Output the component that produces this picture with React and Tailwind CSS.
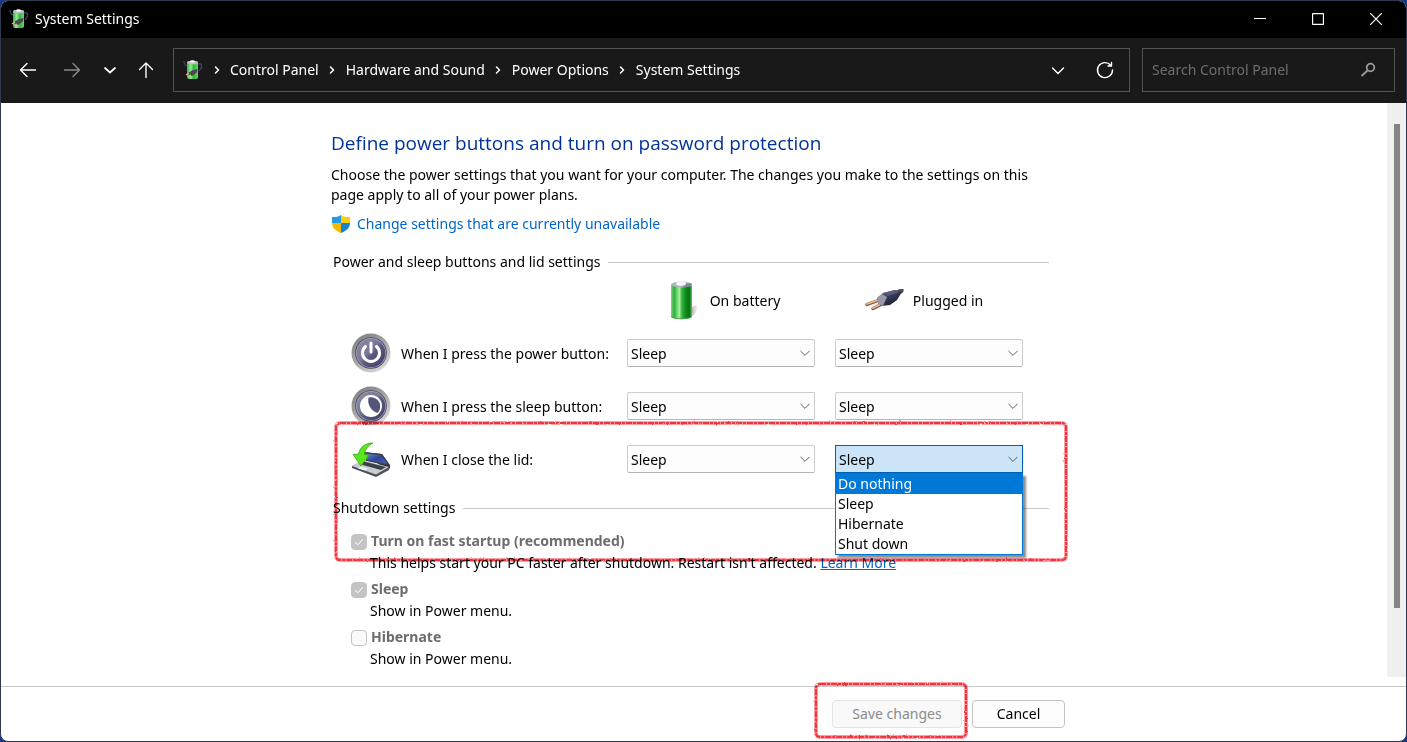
import { useState } from "react";

const OPTIONS = ["Do nothing", "Sleep", "Hibernate", "Shut down"];

const CRUMBS = ["Control Panel", "Hardware and Sound", "Power Options", "System Settings"];

/* ---------- icons ---------- */

function PowerPlanIcon({ className }) {
  return (
    <svg viewBox="0 0 20 20" className={className} aria-hidden="true">
      <defs>
        <linearGradient id="planBody" x1="0" x2="1">
          <stop offset="0" stopColor="#3fae4b" />
          <stop offset="0.35" stopColor="#8df08f" />
          <stop offset="0.6" stopColor="#35b53f" />
          <stop offset="1" stopColor="#66d867" />
        </linearGradient>
      </defs>
      <path d="M1 1c0 3 1 4 3 5" fill="none" stroke="#3a3f55" strokeWidth="1.4" />
      <path d="M15 4c3-1 4 1 3.500 3S17 9 16 11" fill="none" stroke="#3a3f55" strokeWidth="1.500" />
      <rect x="4" y="1" width="11" height="18" rx="2" fill="url(#planBody)" />
      <ellipse cx="9.500" cy="2.500" rx="5.500" ry="1.800" fill="#b9c0c6" />
      <ellipse cx="9.500" cy="1.500" rx="2.500" ry="1.300" fill="#f4f6f8" />
      <path d="M5 13l5-3 4.500-1-.5 3.500-5 3.500-3-1z" fill="#4a4a50" />
      <path d="M3 15l3-2M5 17l3-2" stroke="#e0b090" strokeWidth="1.300" />
    </svg>
  );
}

function BatteryIcon() {
  return (
    <svg viewBox="0 0 40 40" className="size-10" aria-hidden="true">
      <defs>
        <linearGradient id="battBody" x1="0" x2="1">
          <stop offset="0" stopColor="#7ed87c" />
          <stop offset="0.15" stopColor="#2fae3c" />
          <stop offset="0.4" stopColor="#a4f39b" />
          <stop offset="0.52" stopColor="#35b13c" />
          <stop offset="0.7" stopColor="#0f8a1c" />
          <stop offset="0.88" stopColor="#067310" />
          <stop offset="1" stopColor="#5cc65c" />
        </linearGradient>
        <linearGradient id="battShadow" x1="0" x2="1">
          <stop offset="0" stopColor="#999999" />
          <stop offset="1" stopColor="#999999" stopOpacity="0" />
        </linearGradient>
      </defs>
      <path d="M28 28l8-4v5c-2 4-5 7-9 9z" fill="url(#battShadow)" />
      <path d="M9 4v32c1 4 20 4 21 0V4z" fill="url(#battBody)" />
      <ellipse cx="19.500" cy="4.500" rx="10.500" ry="3" fill="#aeb5bd" />
      <path d="M20 4.500l9-1.500c2 2-1 4-7 4.500z" fill="#7e8794" />
      <ellipse cx="19" cy="3.500" rx="5" ry="2.300" fill="#f3f5f8" />
      <path d="M9 36c2 3 19 3 21 0v1c-2 3-19 3-21 0z" fill="#4c9a50" />
    </svg>
  );
}

function PlugIcon() {
  return (
    <svg viewBox="0 0 40 40" className="size-10" aria-hidden="true">
      <defs>
        <linearGradient id="plugBody" x1="0" y1="0" x2="0.6" y2="1">
          <stop offset="0" stopColor="#7f829b" />
          <stop offset="0.4" stopColor="#3d405c" />
          <stop offset="1" stopColor="#1c1e30" />
        </linearGradient>
      </defs>
      <path d="M2 24.500l11-4M8 28.500l10-5" stroke="#8a5a3c" strokeWidth="3.400" strokeLinecap="round" />
      <path d="M2 24l11-4M8 28l10-5" stroke="#eebd98" strokeWidth="1.800" strokeLinecap="round" />
      <path d="M31 11c3-2 5-2.500 8-1.500l-1 3-6 3.500z" fill="#4e5052" />
      <path d="M12 18l6-5 12-3 7 2-5 8-7 5-9 1z" fill="url(#plugBody)" />
      <path d="M12 18l5-4 5 3-4 9-5-2z" fill="#9799aa" />
      <path d="M18 13l12-3 4 2-11 4z" fill="#585b78" />
    </svg>
  );
}

function RoundButtonIcon({ children }) {
  return (
    <svg viewBox="0 0 40 40" className="size-10 shrink-0" aria-hidden="true">
      <defs>
        <linearGradient id="rim" x1="0" y1="0" x2="0.7" y2="1">
          <stop offset="0" stopColor="#777777" />
          <stop offset="0.5" stopColor="#a2a2a2" />
          <stop offset="1" stopColor="#d8d8d8" />
        </linearGradient>
        <linearGradient id="face" x1="0" y1="0" x2="1" y2="1">
          <stop offset="0" stopColor="#8e8ea6" />
          <stop offset="0.45" stopColor="#77779a" />
          <stop offset="0.55" stopColor="#5a5a80" />
          <stop offset="1" stopColor="#3c3c62" />
        </linearGradient>
      </defs>
      <circle cx="20" cy="20" r="19.500" fill="url(#rim)" />
      <circle cx="20" cy="20" r="15.800" fill="#4a4a66" />
      <circle cx="20" cy="20" r="15" fill="#a5a5b8" />
      <circle cx="20" cy="20" r="14.300" fill="url(#face)" />
      {children}
    </svg>
  );
}

function PowerButtonIcon() {
  return (
    <RoundButtonIcon>
      <path
        d="M14.500 13.500a8.500 8.500 0 1 0 11 0"
        fill="none"
        stroke="#ffffff"
        strokeWidth="3"
        strokeLinecap="round"
      />
      <path d="M20 10v9" stroke="#ffffff" strokeWidth="3" strokeLinecap="round" />
    </RoundButtonIcon>
  );
}

function SleepButtonIcon() {
  return (
    <RoundButtonIcon>
      <circle cx="20" cy="20" r="11" fill="#ffffff" />
      <path d="M17.500 11.500c7-1.500 13 4 11.500 11-.5 2-1.500 3.500-2.500 4.500-6.500-2-10.500-9-9-15.500z" fill="#55557a" />
    </RoundButtonIcon>
  );
}

function LidIcon() {
  return (
    <svg viewBox="0 0 40 40" className="size-10 shrink-0" aria-hidden="true">
      <defs>
        <linearGradient id="lidScreen" x1="0" y1="0" x2="1" y2="1">
          <stop offset="0" stopColor="#6f88d0" />
          <stop offset="0.5" stopColor="#2c459c" />
          <stop offset="1" stopColor="#4a66b8" />
        </linearGradient>
      </defs>
      <path d="M13 13l18 2 8 11v3l-3 3z" fill="#2a2d33" />
      <path d="M12 13l19 2 8 12-24-5z" fill="#3d4148" />
      <path d="M14 14.500l16 1.800 6.500 8.700-21-4z" fill="url(#lidScreen)" />
      <path d="M11 22l27 6v3L25 38 1 29v-2z" fill="#4d5157" />
      <path d="M11 21l27 7-13 7.500L1 27z" fill="#c9cdd2" />
      <path d="M13 22.500l22 5.500-5 3-22-6z" fill="#3c4047" />
      <path d="M10 27.500l7 2-3 2-7-2z" fill="#eef0f2" />
      <path
        d="M22 4c-8 0-13 4-14.500 11L2 15.500 10 27l8-11-4.500-.5C14 10 17 7 22 4z"
        fill="#5ae61e"
        stroke="#37a812"
        strokeWidth="0.800"
        strokeLinejoin="round"
      />
    </svg>
  );
}

function ShieldIcon() {
  return (
    <svg viewBox="0 0 20 20" className="size-5" aria-hidden="true">
      <path d="M10 1C7 3 4 3.200 1 3v6h9z" fill="#1f9be8" />
      <path d="M10 1c3 2 6 2.200 9 2v6h-9z" fill="#ffcf05" />
      <path d="M1 9c0 5 4 8 9 10V9z" fill="#f6b900" />
      <path d="M19 9c0 5-4 8-9 10V9z" fill="#1583cf" />
    </svg>
  );
}

function Stroke({ d, size = "size-5", width = 1.4 }) {
  return (
    <svg viewBox="0 0 20 20" className={`${size} shrink-0`} aria-hidden="true">
      <path d={d} fill="none" stroke="currentColor" strokeWidth={width} strokeLinecap="round" strokeLinejoin="round" />
    </svg>
  );
}

// Hand-drawn looking red marker frame
function MarkerFrame({ id, className }) {
  return (
    <svg className={`pointer-events-none absolute overflow-visible mix-blend-multiply ${className}`} aria-hidden="true">
      <filter id={id} x="-5%" y="-5%" width="110%" height="110%">
        <feTurbulence type="fractalNoise" baseFrequency="0.3" numOctaves="2" seed="4" />
        <feDisplacementMap in="SourceGraphic" scale="2" />
      </filter>
      <g filter={`url(#${id})`} fill="none">
        <rect width="100%" height="100%" rx="4" stroke="#ff9da5" strokeWidth="4" />
        <rect width="100%" height="100%" rx="4" stroke="#f03440" strokeWidth="2" strokeDasharray="6 1 3 1" />
      </g>
    </svg>
  );
}

/* ---------- window chrome ---------- */

function TitleBar() {
  return (
    <header className="flex h-[37px] shrink-0 items-center bg-black pr-px pb-px pl-2 text-white">
      <PowerPlanIcon className="size-5" />
      <span className="ml-1.5 flex-1">System Settings</span>
      <button aria-label="Minimize" className="flex h-full w-[58px] items-center justify-center">
        <svg viewBox="0 0 12 12" className="size-3"><path d="M0 5.500h12" stroke="currentColor" /></svg>
      </button>
      <button aria-label="Maximize" className="flex h-full w-[58px] items-center justify-center">
        <svg viewBox="0 0 12 12" className="size-3">
          <rect x="0.500" y="0.500" width="11" height="11" rx="1" fill="none" stroke="currentColor" strokeWidth="1.300" />
        </svg>
      </button>
      <button aria-label="Close" className="flex h-full w-[58px] items-center justify-center">
        <svg viewBox="0 0 12 12" className="size-3"><path d="M0 0l12 12M12 0L0 12" stroke="currentColor" strokeWidth="1.200" /></svg>
      </button>
    </header>
  );
}

function Toolbar() {
  return (
    <nav className="flex h-[65px] shrink-0 items-center bg-[#191919] pr-[11px] pb-0.5 pl-[17px] text-white">
      <button aria-label="Back" className="mr-6"><Stroke d="M17.500 10H3M9 3.500L2.500 10l6.500 6.500" /></button>
      <button aria-label="Forward" className="mr-[18px] text-[#8b8b8b]"><Stroke d="M2.500 10H17M11 3.500l6.500 6.500-6.500 6.500" /></button>
      <button aria-label="Recent locations" className="mr-4"><Stroke d="M5 8l5 4.500L15 8" width={1.7} /></button>
      <button aria-label="Up" className="mr-[17px]"><Stroke d="M10 17.500V3M3.500 9.500L10 3l6.500 6.500" /></button>

      <div className="flex h-11 flex-1 items-center border border-[#535353] px-[9px]">
        <PowerPlanIcon className="size-5" />
        <ol className="flex flex-1 items-center">
          {CRUMBS.map((crumb) => (
            <li key={crumb} className="flex items-center">
              <span className="flex w-[27px] justify-center">
                <Stroke d="M7 4l6 6-6 6" size="size-2.5" width={3} />
              </span>
              <a href="#" className="whitespace-nowrap">{crumb}</a>
            </li>
          ))}
        </ol>
        <button aria-label="Previous locations" className="mr-[27px]"><Stroke d="M4.500 8l5.500 5.500L15.500 8" /></button>
        <button aria-label="Refresh" className="mr-[5px]">
          <Stroke d="M15.500 5A7.500 7.500 0 1 0 17.500 10M16.500 2.500V6H13" />
        </button>
      </div>

      <label className="ml-3 flex h-11 w-[253px] items-center border border-[#535353] pr-4 pl-[9px]">
        <input
          type="search"
          aria-label="Search Control Panel"
          placeholder="Search Control Panel"
          className="min-w-0 flex-1 bg-transparent outline-none placeholder:text-[#6d6d6d]"
        />
        <svg viewBox="0 0 20 20" className="size-5 text-[#9a9a9a]" aria-hidden="true">
          <circle cx="12.500" cy="7.500" r="3.800" fill="none" stroke="currentColor" strokeWidth="1.800" />
          <path d="M9.500 10.500l-6 5.500" stroke="currentColor" strokeWidth="1.800" />
        </svg>
      </label>
    </nav>
  );
}

/* ---------- page parts ---------- */

function GroupHeading({ children }) {
  return (
    <h2 className="flex items-center gap-2 pl-0.5 leading-5">
      {children}
      <span className="h-px flex-1 bg-[#c8c8c8]" />
    </h2>
  );
}

function ActionSelect({ label, open = false }) {
  const [value, setValue] = useState("Sleep");

  return (
    <div className="relative">
      <select
        aria-label={label}
        value={value}
        onChange={(e) => setValue(e.target.value)}
        className={`block h-7 w-full appearance-none border pt-px pl-[3px] ${
          open
            ? "border-[#0060b0] bg-[#cce4f7]"
            : "rounded-xs border-[#cccccc] border-b-[#b4b4b4] bg-[#fdfdfd]"
        }`}
      >
        {OPTIONS.map((option) => (
          <option key={option}>{option}</option>
        ))}
      </select>
      <span className="pointer-events-none absolute top-2 right-1 text-[#555555]">
        <Stroke d="M3 7l7 7 7-7" size="size-3" width={1.6} />
      </span>
      {open && (
        <ul
          role="listbox"
          aria-label={label}
          className="absolute top-7 left-0 z-20 w-full border border-[#0078d7] bg-white leading-5 shadow-[3px_3px_2px_rgba(0,0,0,0.45)]"
        >
          {OPTIONS.map((option, i) => (
            <li
              key={option}
              role="option"
              aria-selected={i === 0}
              className={i === 0 ? "bg-[#0078d7] pl-0.5 text-white" : "pl-0.5"}
            >
              {option}
            </li>
          ))}
        </ul>
      )}
    </div>
  );
}

function SettingRow({ icon, label, open }) {
  return (
    <div className="grid h-10 grid-cols-[256px_188px_188px] items-center gap-5">
      <div className="flex items-center gap-2.5 whitespace-nowrap">
        {icon}
        <span className="pt-0.5">{label}</span>
      </div>
      <ActionSelect label={`${label} On battery`} />
      <ActionSelect label={`${label} Plugged in`} open={open} />
    </div>
  );
}

function ShutdownOption({ id, title, checked, children }) {
  return (
    <div className="leading-5">
      <div className="flex items-center gap-1">
        <span className="relative mt-0.5 size-4">
          <input
            id={id}
            type="checkbox"
            defaultChecked={checked}
            disabled
            className="block size-4 appearance-none rounded-sm border border-[#c4c4c4] bg-[#fafafa] checked:bg-[#c4c4c4]"
          />
          {checked && (
            <span className="pointer-events-none absolute top-[3px] left-[3px] text-white">
              <Stroke d="M3 11l5 4.500L17 5" size="size-2.5" width={2} />
            </span>
          )}
        </span>
        <label htmlFor={id} className="font-bold text-[#6d6d6d]">{title}</label>
      </div>
      <p className="mt-0.5 pl-[19px]">{children}</p>
    </div>
  );
}

export default function App() {
  return (
    <div className="h-screen bg-[#173a86]">
      <div className="flex h-full flex-col overflow-hidden rounded-lg border border-[#2f3a4c] bg-white font-['Noto_Sans','Open_Sans',sans-serif] text-sm text-black">
        <TitleBar />
        <Toolbar />

        <div className="mb-[9px] flex min-h-0 flex-1">
          <main className="min-w-0 flex-1 overflow-hidden">
            <div className="relative mx-auto w-full max-w-[726px] pt-[26px] pr-2">
              <h1 className="font-['Open_Sans','Noto_Sans',sans-serif] text-[19px] leading-7 text-[#003399]">
                Define power buttons and turn on password protection
              </h1>
              <p className="mt-2 leading-5">
                Choose the power settings that you want for your computer. The changes you make to the settings on this
                page apply to all of your power plans.
              </p>
              <div className="mt-[9px] flex items-center gap-1.5 leading-5">
                <ShieldIcon />
                <a href="#" className="text-[#0066cc]">Change settings that are currently unavailable</a>
              </div>

              <section className="mt-[18px]">
                <GroupHeading>Power and sleep buttons and lid settings</GroupHeading>
                <div className="mt-2 grid h-10 grid-cols-[256px_188px_188px] gap-5 pl-5">
                  <div className="col-start-2 flex items-center justify-center gap-2">
                    <BatteryIcon />
                    <span className="pt-0.5">On battery</span>
                  </div>
                  <div className="flex items-center justify-center gap-2 pr-2.5">
                    <PlugIcon />
                    <span className="pt-0.5">Plugged in</span>
                  </div>
                </div>
                <div className="mt-[13px] flex flex-col gap-[13px] pl-5">
                  <SettingRow icon={<PowerButtonIcon />} label="When I press the power button:" />
                  <SettingRow icon={<SleepButtonIcon />} label="When I press the sleep button:" />
                  <SettingRow icon={<LidIcon />} label="When I close the lid:" open />
                </div>
              </section>

              <section className="mt-[19px]">
                <GroupHeading>Shutdown settings</GroupHeading>
                <div className="mt-[13px] flex flex-col gap-1.5 pl-5">
                  <ShutdownOption id="fast-startup" title="Turn on fast startup (recommended)" checked>
                    This helps start your PC faster after shutdown. Restart isn't affected.{" "}
                    <a href="#" className="text-[#0066cc] underline">Learn More</a>
                  </ShutdownOption>
                  <ShutdownOption id="sleep" title="Sleep" checked>Show in Power menu.</ShutdownOption>
                  <ShutdownOption id="hibernate" title="Hibernate">Show in Power menu.</ShutdownOption>
                </div>
              </section>

              <MarkerFrame id="markerLid" className="top-80 left-[5px] h-[137px] w-[730px]" />
            </div>
          </main>

          {/* Scrollbar */}
          <div className="flex w-[19px] flex-col items-center bg-[#f0f0f0] pt-[21px]">
            <div className="h-7/8 w-1.5 bg-[#858585]" />
          </div>
        </div>

        <footer className="shrink-0 border-t border-[#c8c8c8] py-[13px]">
          <div className="mx-auto flex w-full max-w-[723px] justify-end gap-2.5">
            <div className="relative">
              <button disabled className="h-7 w-[130px] rounded-sm border border-[#e4e4e4] bg-[#f9f9f9] text-[#8b8b8b]">
                Save changes
              </button>
              <MarkerFrame id="markerSave" className="-top-4 -left-4 h-[53px] w-[150px]" />
            </div>
            <button className="h-7 w-[93px] rounded-sm border border-[#c4c4c4] bg-[#fdfdfd]">Cancel</button>
          </div>
        </footer>
      </div>
    </div>
  );
}
